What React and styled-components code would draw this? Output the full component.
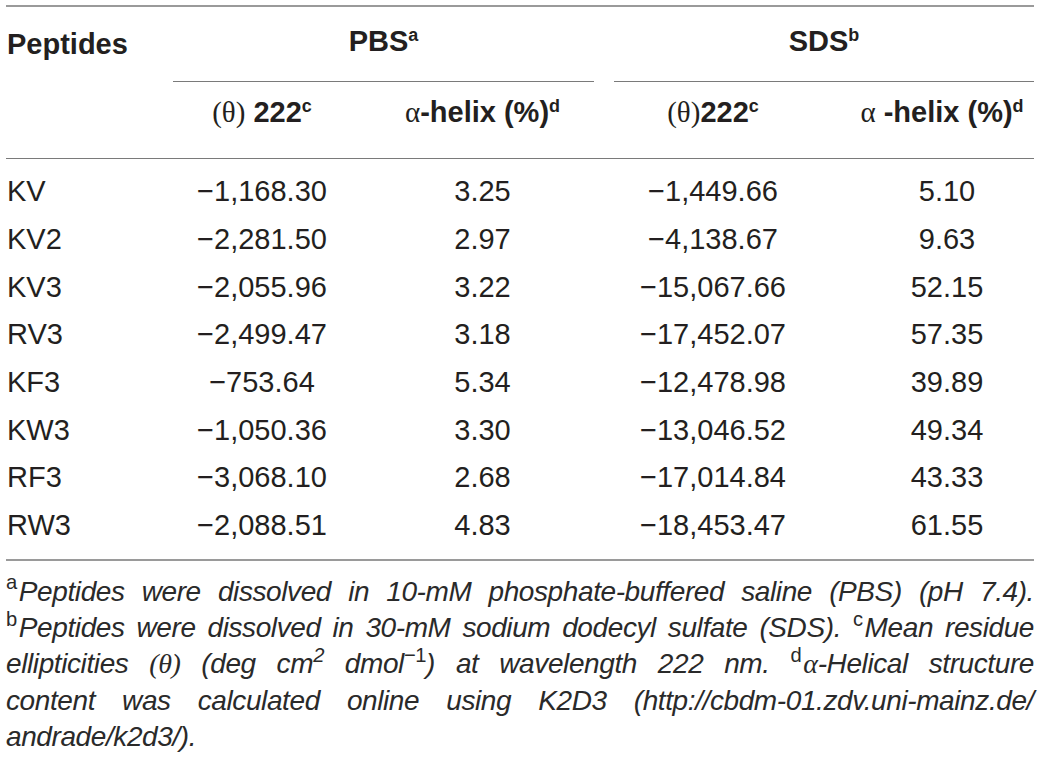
import styled, { createGlobalStyle } from "styled-components"

const GlobalStyle = createGlobalStyle`
    body {
        margin: 0;
        background: #fff;
        font-family: "Liberation Sans", Arial, sans-serif;
        color: #231f20;
    }
`

const Wrapper = styled.div`
    width: 1028px;
    padding: 5px 6px 0px 6px;
`

const Table = styled.table`
    width: 1028px;
    border-collapse: collapse;
    table-layout: fixed;
    border-top: 2px solid #9a9a9a;
`

const Col = styled.col`
    width: ${(p) => p.w}px;
`

const HeadCell = styled.th`
    font-size: 29px;
    font-weight: 700;
    height: ${(p) => p.h || 75}px;
    padding: 0px;
    padding-left: ${(p) => p.pl || 0}px;
    padding-bottom: ${(p) => p.pb || 0}px;
    text-align: ${(p) => p.align || "center"};
    vertical-align: middle;
    white-space: nowrap;
    box-sizing: border-box;
`

const GroupLabel = styled.div`
    height: 75px;
    padding-bottom: 6px;
    display: flex;
    align-items: center;
    justify-content: center;
    margin-right: ${(p) => p.gap || 0}px;
    border-bottom: 1.5px solid #7a7a7a;
    box-sizing: border-box;
`

const HeadRow = styled.tr`
    border-bottom: ${(p) => (p.last ? "1.5px solid #7a7a7a" : "none")};
`

const Cell = styled.td`
    font-size: 29px;
    height: 47.7px;
    padding: 0px;
    padding-left: ${(p) => p.pl || 0}px;
    text-align: ${(p) => p.align || "center"};
    vertical-align: middle;
    white-space: nowrap;
`

const Spacer = styled.tr`
    height: ${(p) => p.h}px;
`

const Body = styled.tbody`
    border-bottom: 2px solid #9a9a9a;
`

const Notes = styled.div`
    padding-top: 13px;
    font-size: 28px;
    letter-spacing: -0.4px;
    line-height: 36.4px;
    font-style: italic;
    color: #2a2a2a;
`

const NoteLine = styled.div`
    white-space: normal;
    text-align: ${(p) => (p.last ? "left" : "justify")};
    text-align-last: ${(p) => (p.last ? "left" : "justify")};
`

const Sup = styled.sup`
    font-size: ${(p) => p.size || "0.62em"};
    line-height: 0;
    vertical-align: 0.55em;
    font-style: ${(p) => (p.upright ? "normal" : "inherit")};
`

const NoteMark = styled.sup`
    font-size: 0.72em;
    line-height: 0;
    vertical-align: 0.55em;
    font-style: normal;
    margin-right: 2px;
`

const Greek = styled.span`
    font-family: "Liberation Serif", "DejaVu Serif", serif;
    font-weight: 400;
`

const rows = [
    ["KV", "\u22121,168.30", "3.25", "\u22121,449.66", "5.10"],
    ["KV2", "\u22122,281.50", "2.97", "\u22124,138.67", "9.63"],
    ["KV3", "\u22122,055.96", "3.22", "\u221215,067.66", "52.15"],
    ["RV3", "\u22122,499.47", "3.18", "\u221217,452.07", "57.35"],
    ["KF3", "\u2212753.64", "5.34", "\u221212,478.98", "39.89"],
    ["KW3", "\u22121,050.36", "3.30", "\u221213,046.52", "49.34"],
    ["RF3", "\u22123,068.10", "2.68", "\u221217,014.84", "43.33"],
    ["RW3", "\u22122,088.51", "4.83", "\u221218,453.47", "61.55"],
]

const App = () => {
    return (
        <Wrapper>
            <GlobalStyle />
            <Table>
                <colgroup>
                    <Col w={167} />
                    <Col w={178} />
                    <Col w={263} />
                    <Col w={198} />
                    <Col w={222} />
                </colgroup>
                <thead>
                    <tr>
                        <HeadCell align="left" pl={1}>Peptides</HeadCell>
                        <HeadCell colSpan={2}>
                            <GroupLabel gap={20}><span>PBS<Sup>a</Sup></span></GroupLabel>
                        </HeadCell>
                        <HeadCell colSpan={2}>
                            <GroupLabel><span>SDS<Sup>b</Sup></span></GroupLabel>
                        </HeadCell>
                    </tr>
                    <HeadRow last>
                        <HeadCell h={76} pb={14} />
                        <HeadCell h={76} pb={14}><Greek>(θ)</Greek> 222<Sup>c</Sup></HeadCell>
                        <HeadCell h={76} pb={14}><Greek>α</Greek>-helix (%)<Sup>d</Sup></HeadCell>
                        <HeadCell h={76} pb={14}><Greek>(θ)</Greek>222<Sup>c</Sup></HeadCell>
                        <HeadCell h={76} pb={14} pl={38}><Greek>α</Greek> -helix (%)<Sup>d</Sup></HeadCell>
                    </HeadRow>
                </thead>
                <Body>
                    <Spacer h={10} />
                    {rows.map((r) => (
                        <tr key={r[0]}>
                            <Cell align="left" pl={1}>{r[0]}</Cell>
                            <Cell>{r[1]}</Cell>
                            <Cell>{r[2]}</Cell>
                            <Cell>{r[3]}</Cell>
                            <Cell pl={48}>{r[4]}</Cell>
                        </tr>
                    ))}
                    <Spacer h={10} />
                </Body>
            </Table>
            <Notes>
                <NoteLine>
                    <NoteMark>a</NoteMark>Peptides were dissolved in 10-mM phosphate-buffered saline (PBS) (pH 7.4).
                </NoteLine>
                <NoteLine>
                    <NoteMark>b</NoteMark>Peptides were dissolved in 30-mM sodium dodecyl sulfate (SDS). <NoteMark>c</NoteMark>Mean residue
                </NoteLine>
                <NoteLine>
                    ellipticities <Greek>(θ)</Greek> (deg cm<Sup size="0.72em">2</Sup> dmol<Sup size="0.72em" upright>−1</Sup>) at wavelength 222 nm. <NoteMark>d</NoteMark><Greek>α</Greek>-Helical structure
                </NoteLine>
                <NoteLine>
                    content was calculated online using K2D3 (http://cbdm-01.zdv.uni-mainz.de/
                </NoteLine>
                <NoteLine last>
                    andrade/k2d3/).
                </NoteLine>
            </Notes>
        </Wrapper>
    )
}

export default App
